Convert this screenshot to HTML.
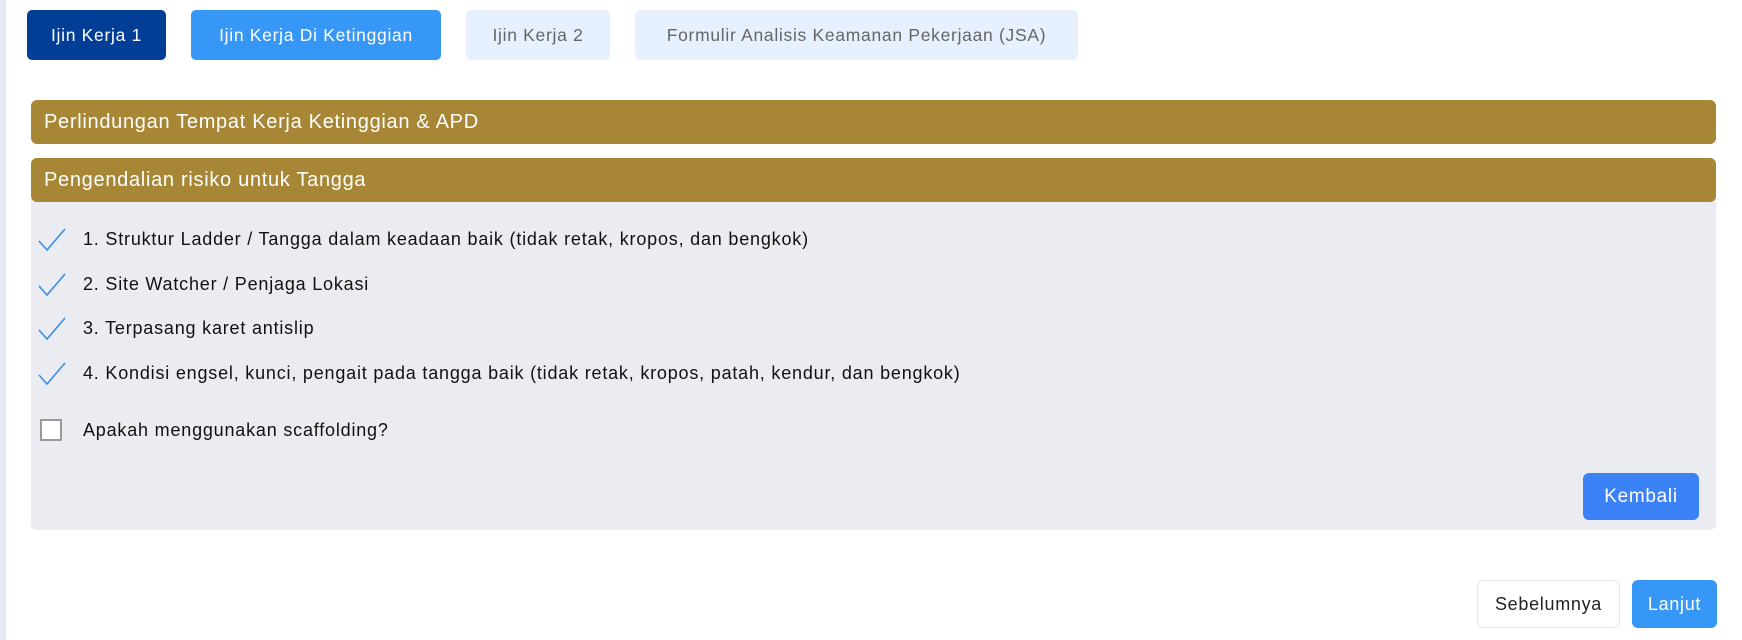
<!DOCTYPE html>
<html><head><style>
*{box-sizing:border-box;margin:0;padding:0}
body{width:1742px;height:640px;background:#fff;font-family:"Liberation Sans",sans-serif;position:relative;overflow:hidden;letter-spacing:0.7px}
.lb{position:absolute;left:0;top:0;width:6px;height:640px;background:#e6eaf4}
.tab{position:absolute;top:10px;height:50px;border-radius:5px;display:flex;align-items:center;justify-content:center;font-size:17.5px}
.hdr{position:absolute;left:31px;width:1685px;height:44px;background:#a78735;color:#fff;font-size:20px;padding-left:13px;display:flex;align-items:center;border-radius:6px}
.body{position:absolute;left:31px;top:196px;width:1685px;height:334px;background:#ebecf1;border-radius:0 0 6px 6px}
.it{position:absolute;left:83px;font-size:18px;color:#111;letter-spacing:0.8px}
.ck{position:absolute;left:37px}
.btn{position:absolute;border-radius:6px;display:flex;align-items:center;justify-content:center;font-size:18px}
</style></head><body>
<div class="lb"></div>
<div class="tab" style="left:27px;width:139px;background:#023e96;color:#fff">Ijin Kerja 1</div>
<div class="tab" style="left:191px;width:250px;background:#3797f6;color:#fff">Ijin Kerja Di Ketinggian</div>
<div class="tab" style="left:466px;width:144px;background:#e6f0fe;color:#666">Ijin Kerja 2</div>
<div class="tab" style="left:635px;width:443px;background:#e6f0fe;color:#666">Formulir Analisis Keamanan Pekerjaan (JSA)</div>
<div class="hdr" style="top:100px">Perlindungan Tempat Kerja Ketinggian &amp; APD</div>
<div class="body"></div>
<div class="hdr" style="top:158px">Pengendalian risiko untuk Tangga</div>
<svg class="ck" style="top:227px" width="30" height="26"><path d="M2 14 L10 23 L28 2" fill="none" stroke="#3a8ee6" stroke-width="1.6"/></svg>
<div class="it" style="top:229px">1. Struktur Ladder / Tangga dalam keadaan baik (tidak retak, kropos, dan bengkok)</div>
<svg class="ck" style="top:272px" width="30" height="26"><path d="M2 14 L10 23 L28 2" fill="none" stroke="#3a8ee6" stroke-width="1.6"/></svg>
<div class="it" style="top:274px">2. Site Watcher / Penjaga Lokasi</div>
<svg class="ck" style="top:316px" width="30" height="26"><path d="M2 14 L10 23 L28 2" fill="none" stroke="#3a8ee6" stroke-width="1.6"/></svg>
<div class="it" style="top:318px">3. Terpasang karet antislip</div>
<svg class="ck" style="top:361px" width="30" height="26"><path d="M2 14 L10 23 L28 2" fill="none" stroke="#3a8ee6" stroke-width="1.6"/></svg>
<div class="it" style="top:363px">4. Kondisi engsel, kunci, pengait pada tangga baik (tidak retak, kropos, patah, kendur, dan bengkok)</div>
<div style="position:absolute;left:40px;top:419px;width:22px;height:22px;border:2px solid #999;background:#fff"></div>
<div class="it" style="top:420px">Apakah menggunakan scaffolding?</div>
<div class="btn" style="left:1583px;top:473px;width:116px;height:47px;background:#3b82f6;color:#fff;font-size:19px">Kembali</div>
<div class="btn" style="left:1477px;top:580px;width:143px;height:48px;border:1px solid #e6e6e6;color:#222">Sebelumnya</div>
<div class="btn" style="left:1632px;top:580px;width:85px;height:48px;background:#3797f6;color:#fff">Lanjut</div>
</body></html>
